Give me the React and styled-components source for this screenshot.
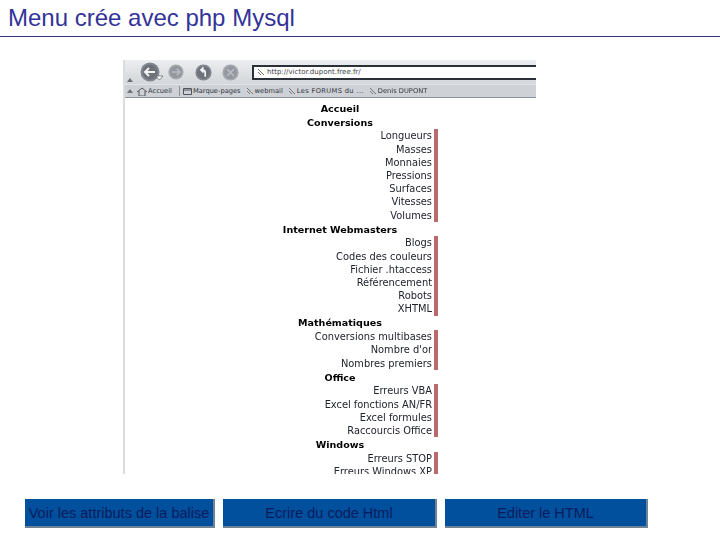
import React from "react";
import styled, { createGlobalStyle } from "styled-components";

const GlobalStyle = createGlobalStyle`
  html, body { margin: 0; padding: 0; background: #fff; }
  body { font-family: "Liberation Sans", Arial, sans-serif; }
`;

const Page = styled.div`
  width: 720px;
  height: 540px;
  overflow: hidden;
  display: flex;
  flex-direction: column;
`;

const Header = styled.div`
  height: 37px;
  border-bottom: 1px solid #333380;
  padding: 5px 0 0 8px;
  box-sizing: border-box;
  flex: none;
`;

const Title = styled.h1`
  margin: 0;
  font-size: 24px;
  line-height: 26px;
  font-weight: 400;
  color: #333399;
`;

const Shot = styled.div`
  width: 413px;
  height: 414px;
  margin: 23px 0 0 123px;
  overflow: hidden;
  flex: none;
  border-left: 2px solid #dcdcdc;
  box-sizing: border-box;
  filter: blur(0.4px);
`;

const NavBar = styled.div`
  height: 24px;
  display: flex;
  align-items: center;
  padding-left: 2px;
  background: linear-gradient(#eceef0, #d3d6da);
`;

const Grip = styled.svg`
  flex: none;
  align-self: flex-end;
  margin-bottom: ${p => p.$mb}px;
`;

const NavIcon = styled.svg`
  flex: none;
  margin-left: ${p => p.$ml}px;
`;

const Address = styled.div`
  flex: 1;
  height: 15px;
  margin-left: 13px;
  background: #fff;
  border: 2px solid #2c3038;
  border-right: none;
  display: flex;
  align-items: center;
  gap: 2px;
  padding-left: 3px;
  font: 7px "DejaVu Sans", sans-serif;
  color: #3c4048;
  box-sizing: border-box;
`;

const Bookmarks = styled.div`
  height: 14px;
  box-sizing: border-box;
  display: flex;
  align-items: center;
  padding-left: 2px;
  background: #ced1d6;
  border-top: 1px solid #e2e4e7;
  border-bottom: 1px solid #8d9096;
  font: 6.7px "DejaVu Sans", sans-serif;
  color: #30343c;
  white-space: nowrap;
`;

const Mark = styled.span`
  display: inline-flex;
  align-items: center;
  gap: 1px;
  margin-left: ${p => p.$ml}px;
  letter-spacing: ${p => p.$ls || 0}px;
`;

const Sep = styled.span`
  width: 1px;
  height: 10px;
  background: #8d9096;
  margin-left: 7px;
`;

const Menu = styled.div`
  width: 196px;
  margin-left: 117px;
  padding-top: 4.4px;
  font: 9.85px/13.2px "DejaVu Sans", sans-serif;
  color: #20242c;
`;

const Heading = styled.div`
  height: 13.2px;
  text-align: center;
  font-size: 9.55px;
  font-weight: 700;
  color: #000;
`;

const Group = styled.div`
  border-right: 4px solid #b86a6c;
  padding-right: 2px;
  margin: 0.7px 0;
  text-align: right;
`;

const Links = styled.div`
  display: flex;
  margin: 25px 0 0 25px;
  gap: 8px;
  flex: none;
  height: 29px;
`;

const Action = styled.div`
  width: ${p => p.$w}px;
  box-sizing: border-box;
  display: flex;
  align-items: center;
  justify-content: center;
  background: #00509e;
  border-right: 2px solid #6f8296;
  border-bottom: 2px solid #6f8296;
  color: #0c1c5c;
  font-size: 14.5px;
  white-space: nowrap;
`;

const NavButton = ({ ml, size = 20, arrow, dim, badge }) => (
  <NavIcon $ml={ml} width={badge ? size + 4 : size} height={size} viewBox={`0 0 ${badge ? 24 : 20} 20`}>
    <circle cx="10" cy="10" r="9.5" fill={dim ? "#a4a8ae" : "#82878f"} />
    <circle cx="10" cy="10" r="7.5" fill={dim ? "#93979e" : "#6c717a"} />
    <path d={arrow} fill="none" stroke={dim ? "#b8bcc2" : "#f2f3f5"} strokeWidth="2" />
    {badge && <path d="M16 14h7l-3.5 4z" fill="#fff" stroke="#5a5e66" strokeWidth=".7" />}
  </NavIcon>
);

const Link = () => (
  <svg width="8" height="8" viewBox="0 0 8 8">
    <path d="M1 1l6 6M1 4l3 3" fill="none" stroke="#70757e" />
  </svg>
);

const Home = () => (
  <svg width="10" height="9" viewBox="0 0 10 9">
    <path d="M0 5l5-4 5 4M2 4v5h6V4" fill="none" stroke="#50545c" />
  </svg>
);

const Folder = () => (
  <svg width="9" height="8" viewBox="0 0 9 8">
    <path d="M.5 1.5h8v6h-8zM.5 3h8" fill="none" stroke="#50545c" />
  </svg>
);

const Triangle = ({ mb }) => (
  <Grip $mb={mb} width="6" height="4" viewBox="0 0 6 4">
    <path d="M0 4l3-4 3 4z" fill="#6c717a" />
  </Grip>
);

const groupes = [
  { titre: "Conversions", liens: ["Longueurs", "Masses", "Monnaies", "Pressions", "Surfaces", "Vitesses", "Volumes"] },
  { titre: "Internet Webmasters", liens: ["Blogs", "Codes des couleurs", "Fichier .htaccess", "Référencement", "Robots", "XHTML"] },
  { titre: "Mathématiques", liens: ["Conversions multibases", "Nombre d'or", "Nombres premiers"] },
  { titre: "Office", liens: ["Erreurs VBA", "Excel fonctions AN/FR", "Excel formules", "Raccourcis Office"] },
  { titre: "Windows", liens: ["Erreurs STOP", "Erreurs Windows XP"] },
];

export default function App() {
  return (
    <Page>
      <GlobalStyle />
      <Header>
        <Title>Menu crée avec php Mysql</Title>
      </Header>

      <Shot>
        <NavBar>
          <Triangle mb={2} />
          <NavButton ml={7} badge arrow="M15 10H6M9 6l-4 4 4 4" />
          <NavButton ml={4} size={16} dim arrow="M5 10h9M11 6l4 4-4 4" />
          <NavButton ml={11} size={17} arrow="M12 15V10c0-2-1-3-4-3M10 4L7 7l3 3" />
          <NavButton ml={10} size={17} dim arrow="M6 6l8 8M14 6l-8 8" />
          <Address><Link />http://victor.dupont.free.fr/</Address>
        </NavBar>
        <Bookmarks>
          <Triangle mb={4} />
          <Mark $ml={4}><Home />Accueil</Mark>
          <Sep />
          <Mark $ml={3}><Folder />Marque-pages</Mark>
          <Mark $ml={5}><Link />webmail</Mark>
          <Mark $ml={5} $ls={0.35}><Link />Les FORUMS du ...</Mark>
          <Mark $ml={5}><Link />Denis DUPONT</Mark>
        </Bookmarks>
        <Menu>
          <Heading>Accueil</Heading>
          {groupes.map(g => (
            <React.Fragment key={g.titre}>
              <Heading>{g.titre}</Heading>
              <Group>
                {g.liens.map(l => <div key={l}>{l}</div>)}
              </Group>
            </React.Fragment>
          ))}
        </Menu>
      </Shot>

      <Links>
        <Action $w={190}>Voir les attributs de la balise</Action>
        <Action $w={214}>Ecrire du code Html</Action>
        <Action $w={203}>Editer le HTML</Action>
      </Links>
    </Page>
  );
}
